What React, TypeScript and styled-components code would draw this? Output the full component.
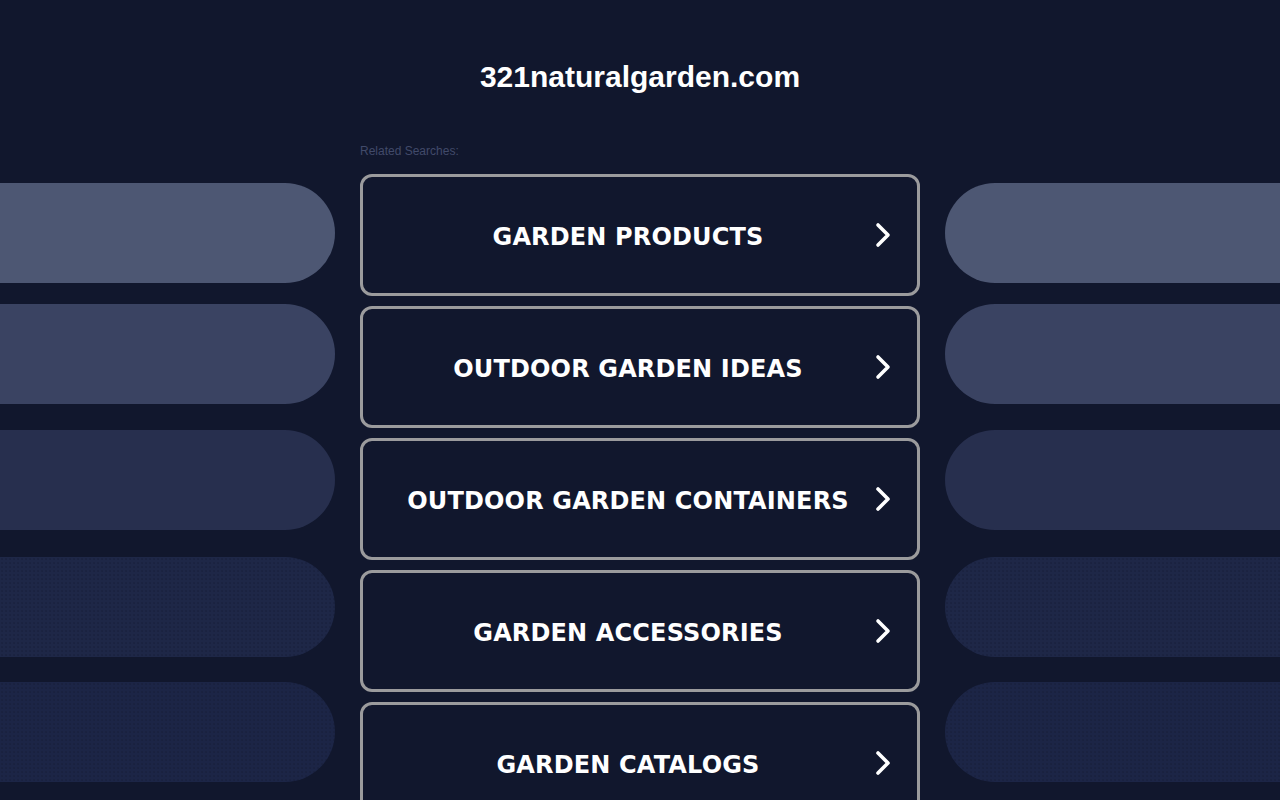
import React from "react";
import styled, { createGlobalStyle } from "styled-components";

const Global = createGlobalStyle`
  html, body { margin: 0; padding: 0; background: #11172d; }
  body { overflow: hidden; }
`;

const Page = styled.div`
  width: 1280px;
  height: 800px;
  overflow: hidden;
  background: #11172d;
  display: flex;
  flex-direction: column;
`;

const Header = styled.h1`
  margin: 57px 0 0;
  height: 40px;
  line-height: 40px;
  text-align: center;
  font-family: "Liberation Sans", Arial, sans-serif;
  font-weight: 700;
  font-size: 30px;
  color: #ffffff;
`;

const Main = styled.div`
  margin-top: 43px;
  display: grid;
  grid-template-columns: 335px 560px 335px;
  column-gap: 25px;
  align-items: start;
`;

const Side = styled.div`
  padding-top: 43px;
  display: flex;
  flex-direction: column;
`;

const Pill = styled.div<{ $bg: string; $side: "left" | "right"; $mt: number; $dots?: boolean }>`
  height: 100px;
  margin-top: ${(p) => p.$mt}px;
  background-color: ${(p) => p.$bg};
  border-radius: ${(p) => (p.$side === "left" ? "0 50px 50px 0" : "50px 0 0 50px")};
  ${(p) =>
    p.$dots
      ? `background-image: radial-gradient(rgba(15,20,40,0.3) 0.6px, transparent 0.9px);
         background-size: 4px 4px;`
      : ""}
`;

const Center = styled.div`
  display: flex;
  flex-direction: column;
`;

const Label = styled.div`
  height: 20px;
  line-height: 22px;
  font-family: "Liberation Sans", Arial, sans-serif;
  font-size: 12px;
  color: #414a6a;
`;

const List = styled.div`
  margin-top: 14px;
  display: flex;
  flex-direction: column;
  gap: 10px;
`;

const Item = styled.a`
  box-sizing: border-box;
  height: 122px;
  border: 3px solid #9b9b9d;
  border-radius: 12px;
  background: #11172d;
  display: flex;
  align-items: center;
  padding: 4px 26px 0 18px;
  text-decoration: none;
  cursor: pointer;
`;

const ItemText = styled.span`
  flex: 1;
  text-align: center;
  font-family: "DejaVu Sans", Verdana, sans-serif;
  font-weight: 700;
  font-size: 24px;
  letter-spacing: 0.15px;
  color: #ffffff;
  white-space: nowrap;
`;

const Chevron = () => (
  <svg width="16" height="26" viewBox="0 0 16 26" style={{ flex: "none", marginTop: "-4px" }}>
    <polyline
      points="3,3 13,13 3,23"
      fill="none"
      stroke="#ffffff"
      strokeWidth="3.6"
      strokeLinecap="round"
      strokeLinejoin="round"
    />
  </svg>
);

const items = [
  "GARDEN PRODUCTS",
  "OUTDOOR GARDEN IDEAS",
  "OUTDOOR GARDEN CONTAINERS",
  "GARDEN ACCESSORIES",
  "GARDEN CATALOGS",
];

const pills = [
  { bg: "#4d5773", mt: 0 },
  { bg: "#3a4362", mt: 21 },
  { bg: "#272f4e", mt: 26 },
  { bg: "#1e2747", mt: 27, dots: true },
  { bg: "#1c2546", mt: 25, dots: true },
];

export default function App() {
  return (
    <Page>
      <Global />
      <Header>321naturalgarden.com</Header>
      <Main>
        <Side>
          {pills.map((p, i) => (
            <Pill key={i} $bg={p.bg} $side="left" $mt={p.mt} $dots={p.dots} />
          ))}
        </Side>
        <Center>
          <Label>Related Searches:</Label>
          <List>
            {items.map((t) => (
              <Item key={t}>
                <ItemText>{t}</ItemText>
                <Chevron />
              </Item>
            ))}
          </List>
        </Center>
        <Side>
          {pills.map((p, i) => (
            <Pill key={i} $bg={p.bg} $side="right" $mt={p.mt} $dots={p.dots} />
          ))}
        </Side>
      </Main>
    </Page>
  );
}
